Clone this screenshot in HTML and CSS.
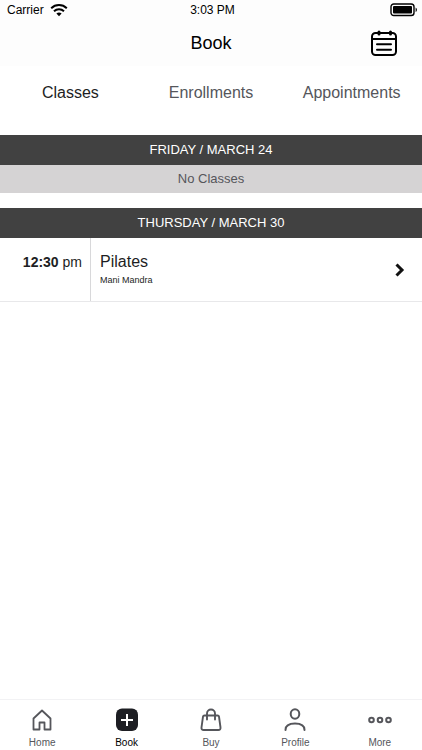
FILE: index.html
```html
<!DOCTYPE html>
<html lang="en">
<head>
<meta charset="utf-8">
<meta name="viewport" content="width=device-width, initial-scale=1">
<title>Book</title>
<link rel="stylesheet" href="styles.css">
</head>
<body>
<div class="status">
  <div class="carrier">
    <span>Carrier</span>
    <svg width="18" height="14" viewBox="0 0 18 14" fill="none" stroke="#000" stroke-width="2" aria-hidden="true"><path d="M1.2 5.2a11.3 11.3 0 0 1 15.6 0"/><path d="M4 8.2a7.2 7.2 0 0 1 10 0"/><path d="M9 13.2 6.4 10.6a3.8 3.8 0 0 1 5.2 0z" fill="#000" stroke="none"/></svg>
  </div>
  <span>3:03 PM</span>
  <svg class="battery" width="28" height="14" viewBox="0 0 28 14" aria-hidden="true"><rect x="1" y="1" width="23" height="11.5" rx="2.8" fill="none" stroke="#000" stroke-width="1.4"/><rect x="3" y="3" width="19" height="7.5" rx="1"/><path d="M25.6 4.5c1.8.8 1.8 3.8 0 4.6z"/></svg>
</div>
<header class="header">
  <h1>Book</h1>
  <button class="calendar" type="button" aria-label="Choose a date">
    <svg width="28" height="28" viewBox="0 0 28 28" fill="none" stroke="#000" stroke-width="2" stroke-linecap="round" aria-hidden="true"><rect x="2" y="4" width="24" height="22" rx="3.5"/><path d="M2 10h24M7 15.3h14M7 20.7h14"/><path d="M9 3v2M20.500 3v2" stroke-width="3"/></svg>
  </button>
</header>
<nav class="tabs" aria-label="Booking type">
  <a class="active" href="#classes" aria-current="page">Classes</a>
  <a href="#enrollments">Enrollments</a>
  <a href="#appointments">Appointments</a>
</nav>
<main class="schedule">
  <section>
    <h2>FRIDAY / MARCH 24</h2>
    <p class="empty">No Classes</p>
  </section>
  <section>
    <h2>THURSDAY / MARCH 30</h2>
    <a class="class-row" href="#pilates">
      <span class="time"><b>12:30</b> pm</span>
      <span class="details">
        <span class="name">Pilates</span>
        <span class="teacher">Mani Mandra</span>
      </span>
      <svg class="chevron" width="12" height="14" viewBox="0 0 12 14" fill="none" stroke="#111" stroke-width="3" aria-hidden="true"><path d="M2.500 1.500 8 7l-5.500 5.500"/></svg>
    </a>
  </section>
</main>
<nav class="tabbar" aria-label="Main">
  <a href="#home">
    <svg width="26" height="26" viewBox="0 0 26 26" fill="none" stroke="#55565b" stroke-width="1.800" stroke-linejoin="round" aria-hidden="true"><path d="M4.500 11.500 13 3.500l8.500 8V22.500H15.500V15.500H10.500V22.500H4.500z"/></svg>
    Home
  </a>
  <a class="active" href="#book" aria-current="page">
    <svg width="26" height="26" viewBox="0 0 26 26" aria-hidden="true"><rect x="2" y="1.500" width="22" height="22.500" rx="6" fill="#1d1e23"/><path d="M13 7v12M7 13h12" stroke="#fff" stroke-width="2"/></svg>
    Book
  </a>
  <a href="#buy">
    <svg width="26" height="26" viewBox="0 0 26 26" fill="none" stroke="#55565b" stroke-width="1.900" stroke-linecap="round" stroke-linejoin="round" aria-hidden="true"><path d="M6.500 8.500h13q1.300 0 1.500 1.200l1.500 10.800q.3 2.500-2.200 2.500H5.700q-2.500 0-2.200-2.500L5 9.700q.2-1.200 1.500-1.200z"/><path d="M9 12.500V6.500a4 4 0 0 1 8 0v6"/></svg>
    Buy
  </a>
  <a href="#profile">
    <svg width="26" height="26" viewBox="0 0 26 26" fill="none" stroke="#55565b" stroke-width="2" stroke-linecap="round" aria-hidden="true"><ellipse cx="13" cy="7" rx="4.300" ry="4.700"/><path d="M3.500 23q0-6.500 9.500-6.500t9.500 6.500"/></svg>
    Profile
  </a>
  <a href="#more">
    <svg width="26" height="26" viewBox="0 0 26 26" fill="none" stroke="#55565b" stroke-width="2" aria-hidden="true"><circle cx="4.500" cy="13" r="2.300"/><circle cx="13" cy="13" r="2.300"/><circle cx="21.500" cy="13" r="2.300"/></svg>
    More
  </a>
</nav>
</body>
</html>
```
FILE: styles.css
```css
* { box-sizing: border-box; }

body {
  margin: 0;
  min-height: 100vh;
  display: flex;
  flex-direction: column;
  background: #fff;
  color: #1d1e23;
  font-family: "Liberation Sans", Arial, sans-serif;
}

a { color: inherit; text-decoration: none; }

h1, h2, p { margin: 0; font-weight: 400; }

svg { display: block; }

.status {
  display: grid;
  grid-template-columns: 1fr auto 1fr;
  align-items: center;
  height: 20px;
  padding: 0 4px 0 7px;
  background: #fdfdfd;
  color: #000;
  font-size: 12px;
}

.carrier { display: flex; align-items: center; gap: 6px; }

.battery { justify-self: end; }

.header {
  display: grid;
  grid-template-columns: 1fr auto 1fr;
  align-items: center;
  height: 46px;
  padding: 0 24px;
  background: #fdfdfd;
  color: #000;
}

.header h1 { grid-column: 2; font-size: 18px; }

.calendar {
  justify-self: end;
  padding: 0;
  border: 0;
  background: none;
}

.tabs {
  display: grid;
  grid-template-columns: repeat(3, 1fr);
  height: 69px;
  padding-top: 16px;
  color: #55565b;
  font-size: 16px;
  line-height: 22px;
  text-align: center;
}

.tabs .active { color: #1d1e23; }

.schedule {
  flex: 1;
  display: flex;
  flex-direction: column;
  gap: 15px;
}

.schedule h2 {
  background: #414141;
  color: #fff;
  font-size: 13px;
  line-height: 30px;
  text-align: center;
}

.empty {
  background: #d5d3d4;
  color: #55565b;
  font-size: 13px;
  line-height: 28px;
  text-align: center;
}

.class-row {
  display: flex;
  height: 64px;
  border-bottom: 1px solid #e8e8ea;
}

.time {
  width: 91px;
  padding: 14px 8px 0 0;
  border-right: 1px solid #d8d8da;
  font-size: 14px;
  line-height: 20px;
  text-align: right;
}

.details {
  flex: 1;
  display: flex;
  flex-direction: column;
  gap: 2px;
  padding: 14px 0 0 9px;
}

.name { font-size: 16px; line-height: 20px; }

.teacher { font-size: 9px; line-height: 12px; }

.chevron { align-self: center; margin-right: 16px; }

.tabbar {
  display: grid;
  grid-template-columns: repeat(5, 1fr);
  height: 51px;
  padding-top: 7px;
  border-top: 1px solid #f2f2f4;
  color: #55565b;
  font-size: 10px;
  line-height: 14px;
}

.tabbar a {
  display: flex;
  flex-direction: column;
  align-items: center;
  gap: 3px;
}

.tabbar .active { color: #000; }
```
